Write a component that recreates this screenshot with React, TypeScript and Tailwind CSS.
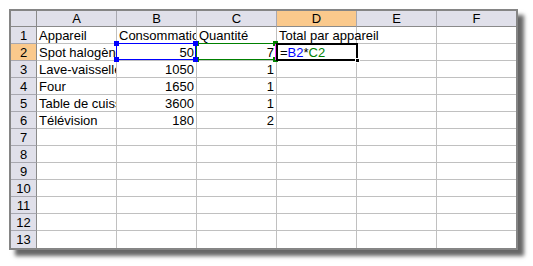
import type { ReactNode } from "react";

const columns = ["A", "B", "C", "D", "E", "F"];

type Row = { a?: string; b?: string; c?: string; d?: string };

const rows: Row[] = [
  { a: "Appareil", b: "Consommation", c: "Quantité", d: "Total par appareil" },
  { a: "Spot halogène", b: "50", c: "7" },
  { a: "Lave-vaisselle", b: "1050", c: "1" },
  { a: "Four", b: "1650", c: "1" },
  { a: "Table de cuisson", b: "3600", c: "1" },
  { a: "Télévision", b: "180", c: "2" },
  {},
  {},
  {},
  {},
  {},
  {},
  {},
];

const isNumber = (text?: string) => !!text && /^\d+$/.test(text);

const Handle = ({ pos, color }: { pos: string; color: string }) => (
  <span className={`absolute h-[5px] w-[5px] ${pos} ${color}`} />
);

// reference box drawn round a cell named in the formula
const RefBox = ({ color, bg, z }: { color: string; bg: string; z: string }) => (
  <div className={`pointer-events-none absolute -left-px -top-px right-0 bottom-0 border ${z} ${color}`}>
    <Handle pos="-left-[3px] -top-[3px]" color={bg} />
    <Handle pos="-right-[3px] -top-[3px]" color={bg} />
    <Handle pos="-left-[3px] -bottom-[3px]" color={bg} />
    <Handle pos="-right-[3px] -bottom-[3px]" color={bg} />
  </div>
);

const Cell = ({
  text,
  last,
  bottom,
  clip,
  children,
}: {
  text?: string;
  last?: boolean;
  bottom?: boolean;
  clip?: boolean;
  children?: ReactNode;
}) => (
  <div
    className={`relative whitespace-nowrap border-[#c0c0c0] px-[2px] leading-[17px] ${last ? "" : "border-r"} ${bottom ? "" : "border-b"} ${
      clip ? "overflow-hidden" : "overflow-visible"
    } ${isNumber(text) ? "text-right" : "text-left"}`}
  >
    {text}
    {children}
  </div>
);

export default function App() {
  return (
    <div className="h-[266px] w-[533px] bg-white pl-[9px] pt-[9px]" style={{ fontFamily: '"Liberation Sans", Arial, sans-serif' }}>
      <div className="w-fit border-2 border-[#858585] bg-white shadow-[6px_6px_4px_rgba(0,0,0,0.6)]">
        <div className="grid grid-cols-[26px_repeat(5,80px)_79px] grid-rows-[16px_repeat(13,17px)] text-[13px] text-black">
          <div className="border-b border-r border-[#8a8a8a] bg-[#e0e0ea]" />
          {columns.map((col, i) => (
            <div
              key={col}
              className={`border-b border-[#8a8a8a] text-center leading-[16px] ${i < 5 ? "border-r border-r-[#a8a8b0]" : ""} ${
                col === "D" ? "bg-[#fac98c]" : "bg-[#e0e0ea]"
              }`}
            >
              {col}
            </div>
          ))}

          {rows.map((row, r) => {
            const n = r + 1;
            const bottom = n === 13;
            return [
              <div
                key={`h${n}`}
                className={`border-r border-[#8a8a8a] text-center leading-[17px] ${bottom ? "" : "border-b border-b-[#a8a8b0]"} ${
                  n === 2 ? "bg-[#fac98c]" : "bg-[#e0e0ea]"
                }`}
              >
                {n}
              </div>,
              <Cell key={`a${n}`} text={row.a} bottom={bottom} clip />,
              <Cell key={`b${n}`} text={row.b} bottom={bottom} clip={n !== 2}>
                {n === 2 && <RefBox color="border-[#0000ff]" bg="bg-[#0000ff]" z="z-[12]" />}
              </Cell>,
              <Cell key={`c${n}`} text={row.c} bottom={bottom} clip={n !== 2}>
                {n === 2 && <RefBox color="border-[#008000]" bg="bg-[#008000]" z="z-[11]" />}
              </Cell>,
              <Cell key={`d${n}`} text={row.d} bottom={bottom}>
                {n === 2 && (
                  <>
                    <span className="relative z-20 ml-px">
                      =<span className="text-[#0000ff]">B2</span>*<span className="text-[#008000]">C2</span>
                    </span>
                    <span className="absolute -left-[2px] top-0 bottom-0 z-20 w-px bg-[#ff40ff]" />
                    <div className="pointer-events-none absolute -left-px -top-px -right-[2px] -bottom-[1px] z-20 border-2 border-black">
                      <span className="absolute -bottom-[4px] -right-[4px] h-[5px] w-[5px] border border-white bg-black" />
                    </div>
                  </>
                )}
              </Cell>,
              <Cell key={`e${n}`} bottom={bottom} />,
              <Cell key={`f${n}`} bottom={bottom} last />,
            ];
          })}
        </div>
      </div>
    </div>
  );
}
